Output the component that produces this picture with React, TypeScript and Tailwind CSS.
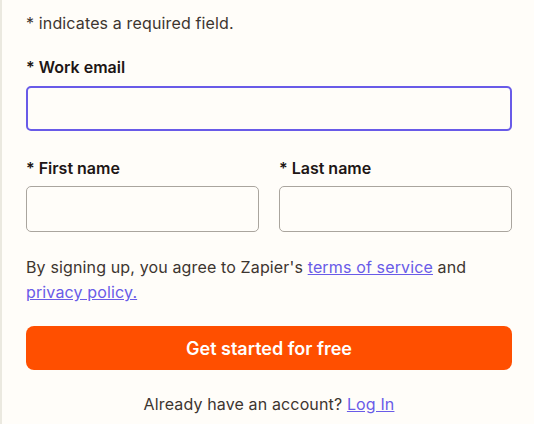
export default function App() {
  return (
    <div
      className="min-h-screen bg-[#fffdf9] border-l-2 border-[#ebe9e0] text-[#201515]"
      style={{ fontFamily: 'Inter, "Noto Sans", sans-serif' }}
    >
      <div className="pl-[24px] pr-[22px] pt-[11px]">
        <p className="text-[16px] leading-6 tracking-[0.14px] text-[#3d3530]">* indicates a required field.</p>

        {/* Email */}
        <div className="mt-[20px]">
          <label className="block text-[16px] font-semibold leading-6">* Work email</label>
          <input
            type="email"
            className="mt-[7px] block w-full h-[45px] rounded-[5px] border-2 border-[#695be8] bg-[#fffdf9] outline-none"
          />
        </div>

        {/* Names */}
        <div className="mt-[25px] grid grid-cols-2 gap-[20px]">
          <div>
            <label className="block text-[16px] font-semibold leading-6">* First name</label>
            <input
              type="text"
              className="mt-[6px] block w-full h-[46px] rounded-[5px] border border-[#aaa59e] bg-[#fffdf9] outline-none"
            />
          </div>
          <div>
            <label className="block text-[16px] font-semibold leading-6">* Last name</label>
            <input
              type="text"
              className="mt-[6px] block w-full h-[46px] rounded-[5px] border border-[#aaa59e] bg-[#fffdf9] outline-none"
            />
          </div>
        </div>

        <p className="mt-[23px] text-[16px] leading-[25px] tracking-[0.14px] text-[#3d3530]">
          By signing up, you agree to Zapier's{' '}
          <a href="#" className="text-[#695be8] underline">terms of service</a> and{' '}
          <a href="#" className="text-[#695be8] underline">privacy policy.</a>
        </p>

        <button className="mt-[21px] w-full h-[44px] rounded-[8px] bg-[#ff4f00] text-white text-[18px] font-semibold">
          Get started for free
        </button>

        <p className="mt-[22px] text-center text-[16px] leading-6 tracking-[0.14px] text-[#3d3530]">
          Already have an account?{' '}
          <a href="#" className="text-[#695be8] underline">Log In</a>
        </p>
      </div>
    </div>
  )
}
